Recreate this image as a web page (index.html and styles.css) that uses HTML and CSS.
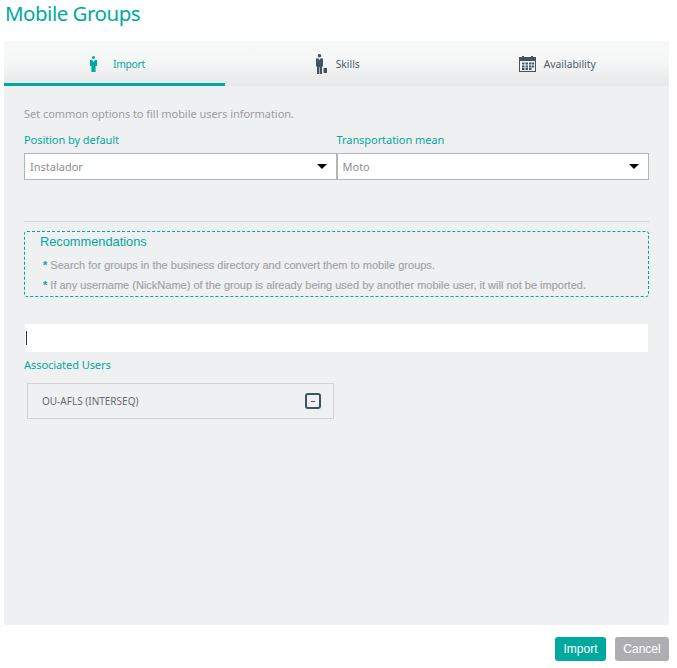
FILE: index.html
```html
<!DOCTYPE html>
<html lang="en">
<head>
<meta charset="utf-8">
<title>Mobile Groups</title>
<link rel="stylesheet" href="styles.css">
</head>
<body>
<h1 class="title">Mobile Groups</h1>
<main class="panel">
  <nav class="tabs">
    <div class="tab tab-active tab-import">
      <svg class="ico" width="7" height="16" viewBox="0 0 7 16"><circle cx="3.500" cy="1.500" r="1.500"/><path d="M0 4h2.400l1.100 2.500L4.600 4H7v6H5.600v6H1.400v-6H0z"/></svg>
      <span>Import</span>
    </div>
    <div class="tab tab-skills">
      <svg class="ico" width="11" height="20" viewBox="0 0 11 20"><circle cx="3.500" cy="1.800" r="1.800"/><path d="M0 4.500h2.800l.7 2 .7-2H7v8H6V20H3.800v-7h-.6v7H1V12.500H0z"/><path d="M7.500 14H11v5H7.500z"/></svg>
      <span>Skills</span>
    </div>
    <div class="tab tab-avail">
      <svg class="ico" width="17" height="16" viewBox="0 0 17 16"><path fill-rule="evenodd" d="M0 1h3V0h2v1h7V0h2v1h3v15H0zM1 5v10h15V5z"/><path d="M3 6.500h2.500v2H3zM6.500 6.500H9v2H6.500zM10 6.500h2.500v2H10zM13 6.500h2v2h-2zM3 9.500h2.500v2H3zM6.500 9.500H9v2H6.500zM10 9.500h2.500v2H10zM13 9.500h2v2h-2zM3 12h2.500v2H3zM6.500 12H9v2H6.500zM10 12h2.500v2H10z"/></svg>
      <span>Availability</span>
    </div>
  </nav>
  <section class="content">
    <p class="intro">Set common options to fill mobile users information.</p>
    <div class="fields">
      <div class="field">
        <label class="label">Position by default</label>
        <div class="select"><span>Instalador</span><i class="caret"></i></div>
      </div>
      <div class="field">
        <label class="label">Transportation mean</label>
        <div class="select"><span>Moto</span><i class="caret"></i></div>
      </div>
    </div>
    <hr class="rule">
    <div class="recs">
      <h2 class="recs-title">Recommendations</h2>
      <p class="rec"><b>*</b> Search for groups in the business directory and convert them to mobile groups.</p>
      <p class="rec"><b>*</b> If any username (NickName) of the group is already being used by another mobile user, it will not be imported.</p>
    </div>
    <div class="search"><i class="cursor"></i></div>
    <div class="label assoc">Associated Users</div>
    <div class="user">
      <span>OU-AFLS (INTERSEQ)</span>
      <span class="minus"><i></i></span>
    </div>
  </section>
</main>
<footer class="actions">
  <button class="btn btn-primary">Import</button>
  <button class="btn btn-muted">Cancel</button>
</footer>
</body>
</html>
```
FILE: styles.css
```css
* { box-sizing: border-box; }
html, body { margin: 0; padding: 0; height: 100%; background: #fff; overflow: hidden; }
body { font-family: "Noto Sans", sans-serif; color: #9a9a9a; }
.title { margin: 0; height: 41px; padding: 0 0 0 5px; font-size: 20.500px; line-height: 26px; font-weight: 400; color: #00a99d; letter-spacing: -0.500px; }
.panel { margin: 0 8px 0 4px; height: 584px; background: #eff0f2; border-radius: 3px; overflow: hidden; }
.tabs { display: flex; height: 45px; background: linear-gradient(#f8f9f9 0%, #f5f6f6 45%, #e7e8e9 100%); }
.tab { flex: 1; display: flex; align-items: center; justify-content: center; font-size: 10.300px; color: #4f5b66; }
.tab .ico { fill: #46535e; }
.tab-import { flex: 0 0 221px; gap: 16px; padding-left: 6px; letter-spacing: -0.300px; }
.tab-skills { gap: 9px; padding-left: 3px; }
.tab-avail { gap: 8px; padding-right: 2px; }
.tab-active { color: #00a99d; border-bottom: 3px solid #00a99d; padding-top: 3px; }
.tab-active .ico { fill: #00a99d; }
.content { padding: 20px 20px 0; }
.intro { margin: 0; font-size: 11px; line-height: 16px; color: #9d9d9d; letter-spacing: -0.040px; }
.fields { display: flex; margin-top: 10px; }
.field { flex: 1; }
.label { display: block; font-size: 11px; line-height: 16px; color: #00a99d; letter-spacing: -0.060px; }
.select { display: flex; justify-content: space-between; align-items: center; height: 27px; margin-top: 5px; padding: 0 9px 0 5px; background: #fff; border: 1px solid #b5b5b5; font-size: 11px; color: #8e8e8e; }
.caret { width: 0; height: 0; border-left: 5px solid transparent; border-right: 5px solid transparent; border-top: 5px solid #000; }
.rule { margin: 41px 0 0; border: 0; border-top: 1px solid #d5d6d8; }
.recs { height: 66px; margin-top: 9px; padding: 1px 0 0 15px; border: 1px dashed #00a99d; border-radius: 3px; font-family: "Liberation Sans", sans-serif; }
.recs-title { margin: 0 0 4px; font-size: 12.800px; line-height: 18px; font-weight: 400; color: #00a99d; }
.rec { margin: 0 0 0 3px; font-size: 11px; line-height: 20px; color: #a2a2a2; font-weight: 400; -webkit-text-stroke: 0.150px #a2a2a2; }
.rec b { color: #00a99d; font-weight: 700; }
.search { display: flex; align-items: center; height: 28px; margin: 27px 1px 0; background: #fff; }
.cursor { width: 1px; height: 14px; margin-left: 1px; background: #333; }
.assoc { margin-top: 5px; }
.user { display: flex; justify-content: space-between; align-items: center; width: 307px; height: 36px; margin: 10px 0 0 3px; padding: 0 12px 0 14px; border: 1px solid #d2d3d5; font-size: 10px; color: #6b6b6b; }
.minus { display: flex; align-items: center; justify-content: center; width: 16px; height: 16px; border: 2px solid #3c5361; border-radius: 3px; }
.minus i { width: 4px; height: 1px; background: #555; }
.actions { display: flex; justify-content: flex-end; gap: 9px; margin: 12px 8px 0 0; }
.btn { height: 24px; padding: 0; border: 0; border-radius: 3px; color: #fff; font-family: "Liberation Sans", sans-serif; font-size: 12px; }
.btn-primary { width: 51px; background: #00a99d; }
.btn-muted { width: 54px; background: #aeadb3; }
```
